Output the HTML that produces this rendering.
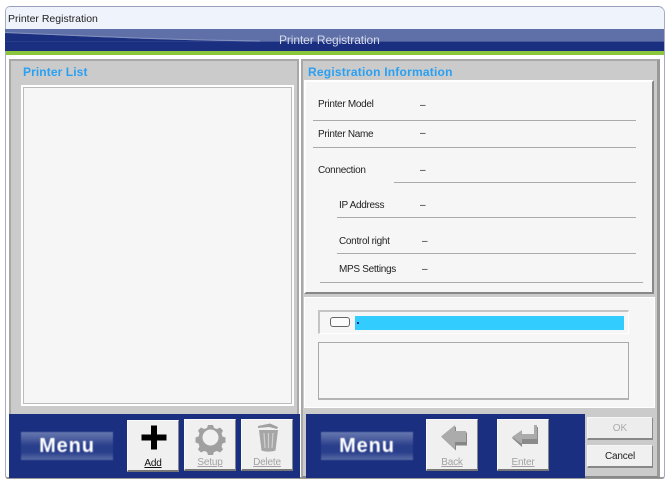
<!DOCTYPE html>
<html><head><meta charset="utf-8">
<style>
html,body{margin:0;padding:0;background:#fff;}
#p{position:relative;width:670px;height:485px;overflow:hidden;background:#fff;font-family:"Liberation Sans",sans-serif;font-size:10px;color:#222;}
#p div{position:absolute;box-sizing:border-box;}
.t{white-space:nowrap;line-height:12px;filter:blur(.3px);}
.n{letter-spacing:-.3px;}
.l{height:1px;background:#aaa;}
.btn{width:52px;height:52px;background:#f0f0f0;border:1px solid #fafafa;border-right:1px solid #888;border-bottom:2px solid #777;}
.cap{left:0;width:50px;text-align:center;top:37px;font-size:10px;color:#a2a2a2;text-decoration:underline;line-height:12px;letter-spacing:-.2px;filter:blur(.3px);}
.menu{width:92px;height:28px;background:linear-gradient(#6879b0 0,#4e619f 22%,#2a3f8c 48%,#2a3f8c 72%,#5a6ca6 100%);color:#fff;font-weight:bold;font-size:20px;text-align:center;line-height:28px;letter-spacing:.9px;filter:blur(.5px);}
svg{position:absolute;left:0;top:0;}
</style></head><body>
<div id="p">
<div style="left:5px;top:6px;width:660px;height:473px;background:#fff;border:1px solid #a8acc0;border-top-color:#9a9eb8;border-radius:5px 7px 3px 3px;border-bottom:2px solid #999"></div>
<div style="left:6px;top:7px;width:658px;height:22px;background:#eff3fb;border-radius:4px 6px 0 0;"></div>
<div class="t" style="left:8px;top:12.500px;font-size:10.500px;color:#222;">Printer Registration</div>
<div style="left:5px;top:29px;width:659px;height:22px;background:linear-gradient(#5f70a9 0,#5f70a9 55%,#1a2f80 60%,#1a2f80 100%);"></div>
<svg width="670" height="60"><path d="M5 33C80 36 150 40 260 41.500H5Z" fill="#1a2f80"/><path d="M5 32.500C80 35.500 150 39.500 260 41" fill="none" stroke="#8592bd" stroke-width="1"/></svg>
<div class="t" style="left:279px;top:34px;font-size:12px;color:#d6dbe9;letter-spacing:-.1px;">Printer Registration</div>
<div style="left:6px;top:51px;width:658px;height:4px;background:#8cc63c;"></div>

<div style="left:9px;top:59px;width:290px;height:356px;background:#cbcbcb;border:2px solid #a8a8a8;border-bottom:0;"></div>
<div class="t" style="left:23px;top:66px;font-size:12px;font-weight:bold;color:#2aa0f2;letter-spacing:.1px;">Printer List</div>
<div style="left:21px;top:85px;width:273px;height:321px;background:#f6f6f6;border:2px solid #fff;outline:1px solid #bbb;outline-offset:-3px;"></div>
<div style="left:9px;top:414px;width:291px;height:64px;background:#1a2f80;"></div>

<div style="left:301px;top:59px;width:359px;height:419px;background:#cbcbcb;border:2px solid #a8a8a8;border-bottom:2px solid #888;border-right:3px solid #999;"></div>
<div class="t" style="left:308px;top:66px;font-size:12px;font-weight:bold;color:#2aa0f2;letter-spacing:.22px;">Registration Information</div>
<div style="left:304px;top:80px;width:350px;height:214px;background:#f6f6f6;border-top:2px solid #fff;border-left:2px solid #fff;border-right:2px solid #888;border-bottom:2px solid #888;"></div>

<div class="t n" style="left:318px;top:99px;">Printer Model</div><div class="t" style="left:420px;top:100px;">–</div>
<div class="l" style="left:313px;top:120px;width:323px;"></div>
<div class="t n" style="left:318px;top:129px;">Printer Name</div><div class="t" style="left:420px;top:128px;">–</div>
<div class="l" style="left:313px;top:147px;width:323px;"></div>
<div class="t n" style="left:318px;top:165px;">Connection</div><div class="t" style="left:420px;top:165px;">–</div>
<div class="l" style="left:394px;top:182px;width:242px;"></div>
<div class="t n" style="left:339px;top:200px;">IP Address</div><div class="t" style="left:420px;top:200px;">–</div>
<div class="l" style="left:337px;top:217px;width:299px;"></div>
<div class="t n" style="left:339px;top:236px;">Control right</div><div class="t" style="left:422px;top:236px;">–</div>
<div class="l" style="left:337px;top:253px;width:299px;"></div>
<div class="t n" style="left:339px;top:264px;">MPS Settings</div><div class="t" style="left:422px;top:264px;">–</div>
<div class="l" style="left:320px;top:282px;width:323px;"></div>

<div style="left:304px;top:297px;width:351px;height:111px;background:#f6f6f6;border:1px solid #fff;"></div>
<div style="left:318px;top:310px;width:311px;height:24px;border-top:2px solid #c4c4c4;border-left:2px solid #c4c4c4;border-bottom:1px solid #fff;border-right:1px solid #fff;"></div>
<div style="left:330px;top:317px;width:20px;height:10px;border:1.500px solid #666;border-radius:3px;background:#fbfbfb;"></div>
<div style="left:355px;top:316px;width:269px;height:14px;background:#33ccff;"></div>
<div style="left:357px;top:322px;width:2px;height:1.500px;background:#1a2f80;"></div>
<div style="left:318px;top:342px;width:311px;height:58px;border:1px solid #aaa;border-bottom:2px solid #b4b4b4;background:#f6f6f6;"></div>

<div style="left:306px;top:414px;width:279px;height:64px;background:#1a2f80;"></div>
<div class="menu" style="left:21px;top:432px;">Menu</div>
<div class="menu" style="left:321px;top:432px;">Menu</div>

<div class="btn" style="left:127px;top:420px;">
 <svg width="50" height="36"><path d="M23 4.500h6v9h9.500v6h-9.500v9h-6v-9h-9.500v-6h9.500z" fill="#000"/></svg>
 <div class="cap" style="color:#111;">Add</div></div>
<div class="btn" style="left:184px;top:419px;">
 <svg width="50" height="38"><path d="M23 5h5l1 3 3 1 3-1.500 3 3-1.500 3 1 3 3 1v5l-3 1-1 3 1.500 3-3 3-3-1.500-3 1-1 3h-5l-1-3-3-1-3 1.500-3-3 1.500-3-1-3-3-1v-5l3-1 1-3-1.500-3 3-3 3 1.500 3-1z" fill="#a0a0a0"/><circle cx="25.500" cy="17.500" r="8" fill="#f0f0f0"/></svg>
 <div class="cap">Setup</div></div>
<div class="btn" style="left:241px;top:419px;">
 <svg width="50" height="38"><path d="M16 6l12-2.500 8 3.500-1 2-8-2-11 1z" fill="#a0a0a0"/><path d="M17 10h19l-2.500 20.500c-4 1.500-10 1.500-14 0z" fill="#a6a6a6"/><path d="M22 13l1 15M26.500 13v15M31 13l-1 15" stroke="#d0d0d0" stroke-width="1.200" fill="none"/></svg>
 <div class="cap">Delete</div></div>
<div class="btn" style="left:426px;top:419px;">
 <svg width="50" height="38"><path d="M15 17.500L29 6.500v6h11v13H29v5z" fill="#868686"/><path d="M14 16.500L28 5v6h11v11H28v7z" fill="#ababab"/></svg>
 <div class="cap">Back</div></div>
<div class="btn" style="left:497px;top:419px;">
 <svg width="50" height="38"><path d="M14 18l10-7v4h13V7h3v17H24v3z" fill="#8a8a8a"/><path d="M14 17l10-7v4h12V5h3v14H24v5z" fill="#ababab"/></svg>
 <div class="cap">Enter</div></div>

<div style="left:587px;top:417px;width:66px;height:23px;background:#ededed;border:1px solid #f6f6f6;border-right:1px solid #888;border-bottom:2px solid #888;"></div>
<div class="t" style="left:587px;top:423px;width:66px;text-align:center;color:#aaa;">OK</div>
<div style="left:587px;top:445px;width:66px;height:23px;background:#f0f0f0;border:1px solid #f6f6f6;border-right:1px solid #888;border-bottom:2px solid #888;"></div>
<div class="t" style="left:587px;top:451px;width:66px;text-align:center;color:#222;letter-spacing:-.2px;">Cancel</div>
</div>
</body></html>
